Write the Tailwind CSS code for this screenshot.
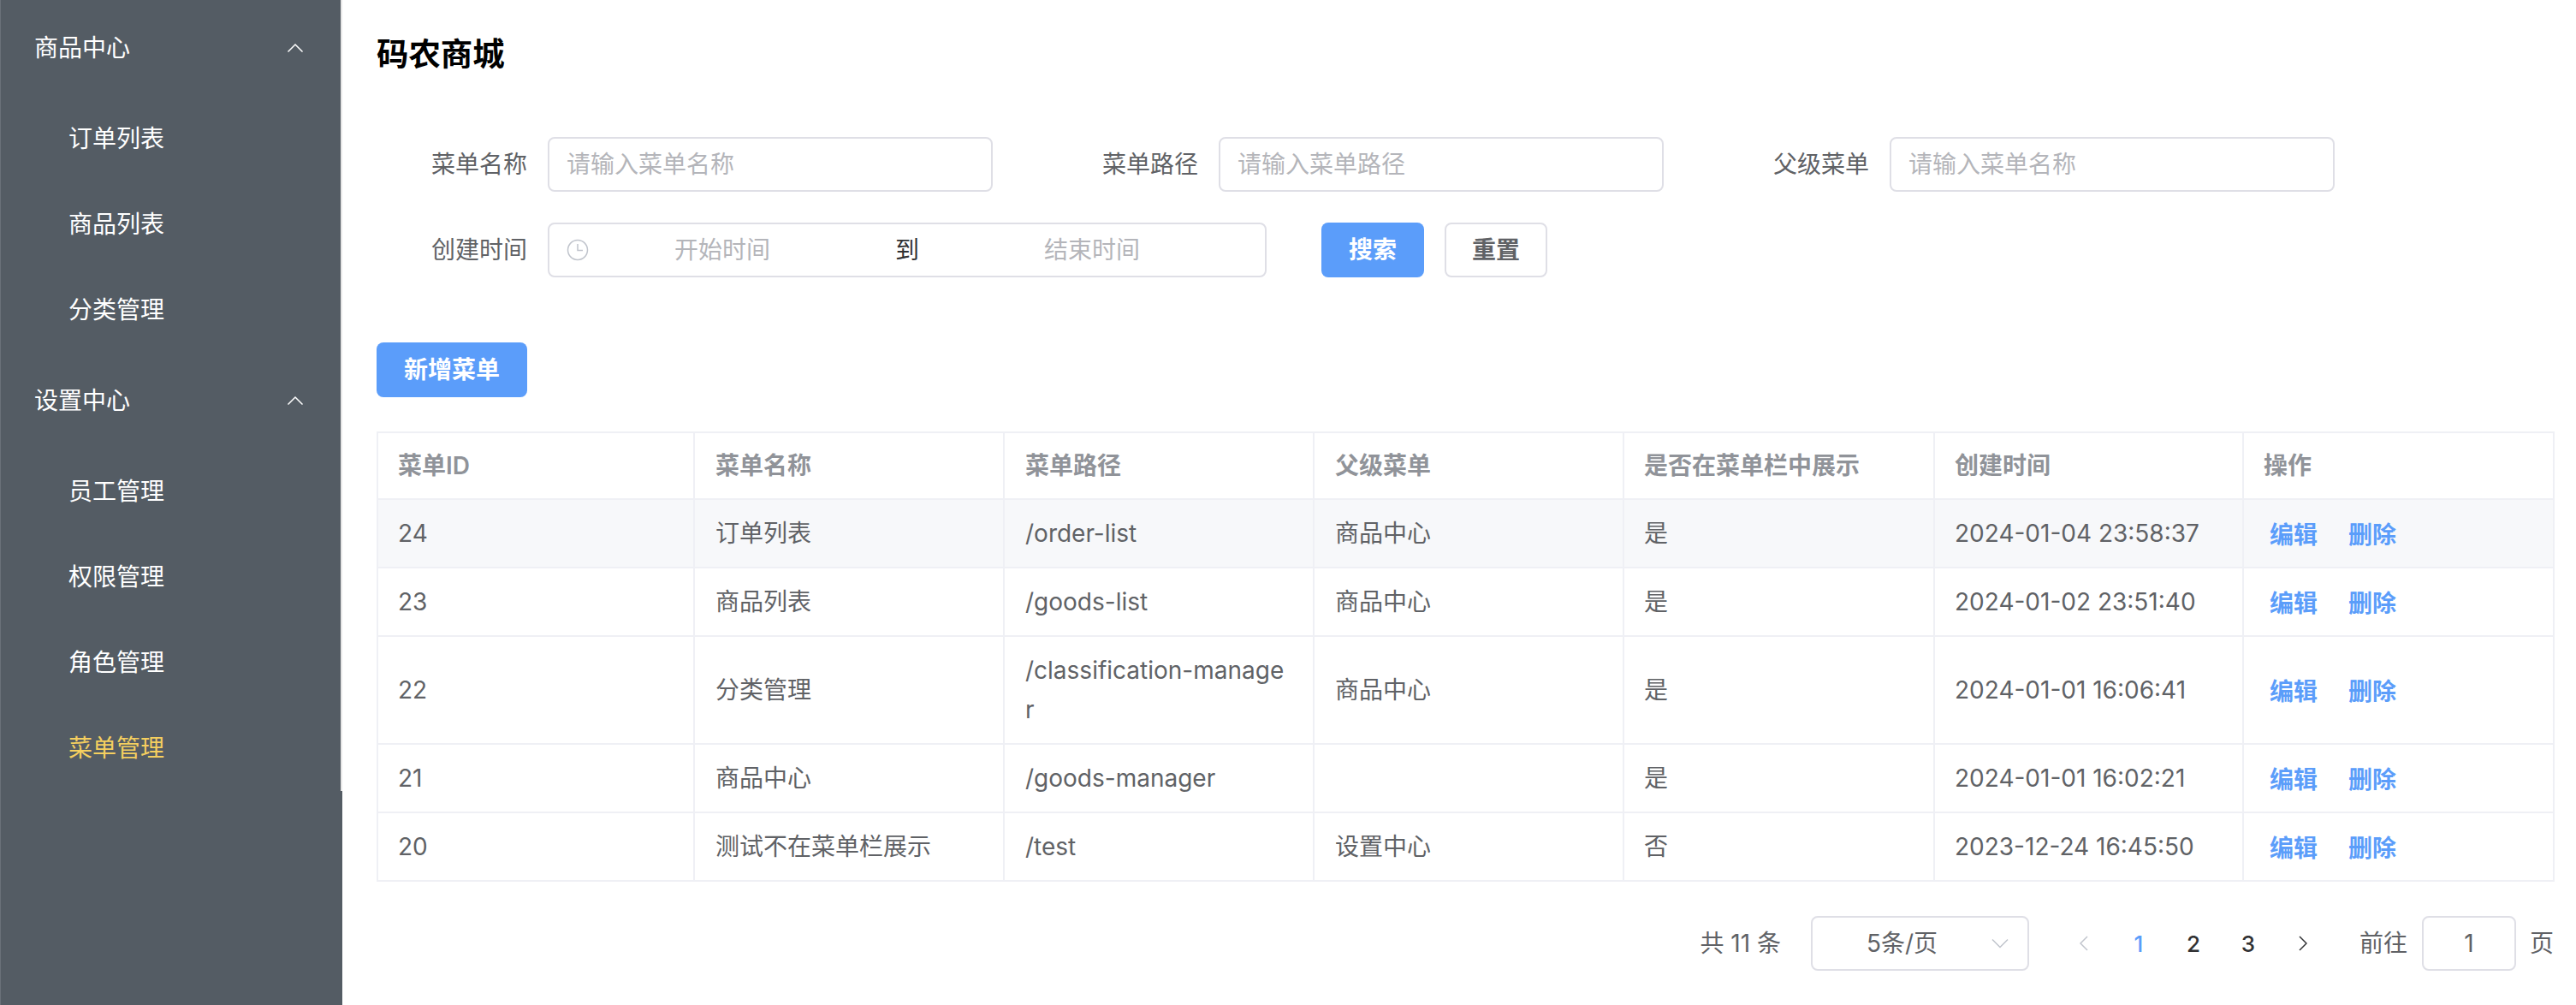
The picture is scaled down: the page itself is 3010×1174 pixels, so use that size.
<!DOCTYPE html>
<html lang="zh">
<head>
    <meta charset="UTF-8">
    <meta name="viewport" content="width=device-width, initial-scale=1.0">
    <title>码农商城</title>
    <script src="https://cdn.jsdelivr.net/npm/@tailwindcss/browser@4"></script>
</head>

<body class="bg-white h-[1174px] overflow-hidden flex text-[28px] text-[#606266] font-['Inter','Noto_Sans_CJK_SC',sans-serif]">

    <!--sidebar-->
    <aside class="w-[400px] h-[1174px] shrink-0 bg-[#545c64] border-l border-[#6a7179]">
        <div class="h-[924px] border-r-2 border-[#e6e6e6] text-white">
            <div class="h-[112px] pl-[39px] pr-[43px] flex items-center justify-between">
                <span>商品中心</span>
                <svg class="w-[20px] h-[12px]" viewBox="0 0 20 12" fill="none" stroke="#ffffff" stroke-width="1.5"><path d="M1.500 10.500 10 2l8.500 8.500"/></svg>
            </div>
            <div class="h-[100px] pl-[79px] flex items-center">订单列表</div>
            <div class="h-[100px] pl-[79px] flex items-center">商品列表</div>
            <div class="h-[100px] pl-[79px] flex items-center">分类管理</div>
            <div class="h-[112px] pl-[39px] pr-[43px] flex items-center justify-between">
                <span>设置中心</span>
                <svg class="w-[20px] h-[12px]" viewBox="0 0 20 12" fill="none" stroke="#ffffff" stroke-width="1.5"><path d="M1.500 10.500 10 2l8.500 8.500"/></svg>
            </div>
            <div class="h-[100px] pl-[79px] flex items-center">员工管理</div>
            <div class="h-[100px] pl-[79px] flex items-center">权限管理</div>
            <div class="h-[100px] pl-[79px] flex items-center">角色管理</div>
            <div class="h-[100px] pl-[79px] flex items-center text-[#f5cf5f]">菜单管理</div>
        </div>
    </aside>

    <!--main content-->
    <main class="w-[2610px] pl-[40px] pr-[26px]">
        <h3 class="h-[128px] mb-[32px] flex items-center text-[37.44px] font-bold text-black">码农商城</h3>

        <!--search form-->
        <div class="flex h-[64px] mb-[36px]">
            <label class="w-[200px] pr-[24px] flex items-center justify-end">菜单名称</label>
            <div class="w-[520px] mr-[64px] px-[20px] border-2 border-[#dfdfe6] rounded-[8px] flex items-center text-[#b4b5ba]">请输入菜单名称</div>
            <label class="w-[200px] pr-[24px] flex items-center justify-end">菜单路径</label>
            <div class="w-[520px] mr-[64px] px-[20px] border-2 border-[#dfdfe6] rounded-[8px] flex items-center text-[#b4b5ba]">请输入菜单路径</div>
            <label class="w-[200px] pr-[24px] flex items-center justify-end">父级菜单</label>
            <div class="w-[520px] px-[20px] border-2 border-[#dfdfe6] rounded-[8px] flex items-center text-[#b4b5ba]">请输入菜单名称</div>
        </div>
        <div class="flex h-[64px] mb-[76px]">
            <label class="w-[200px] pr-[24px] flex items-center justify-end">创建时间</label>
            <div class="w-[840px] mr-[64px] pl-[20px] border-2 border-[#dfdfe6] rounded-[8px] flex items-center text-[#b4b5ba]">
                <svg class="w-[26px] h-[26px]" viewBox="0 0 26 26" fill="none" stroke="#c0c4cc" stroke-width="1.5"><circle cx="13" cy="13" r="11.500"/><path d="M13 6v7.500h6"/></svg>
                <div class="w-[312px] text-center">开始时间</div>
                <div class="w-[120px] text-center text-[#303133]">到</div>
                <div class="w-[312px] text-center">结束时间</div>
            </div>
            <button class="w-[120px] mr-[24px] rounded-[8px] bg-[#5b9dfa] text-white font-semibold">搜索</button>
            <button class="w-[120px] rounded-[8px] border-2 border-[#dfdfe6] font-semibold">重置</button>
        </div>

        <button class="block w-[176px] h-[64px] mb-[40px] rounded-[8px] bg-[#5b9dfa] text-white font-semibold">新增菜单</button>

        <!--menu table-->
        <table class="w-[2543px] table-fixed border-collapse leading-[46px]">
            <colgroup>
                <col class="w-[370px]"><col class="w-[362px]"><col class="w-[362px]"><col class="w-[362px]"><col class="w-[363px]"><col class="w-[361px]"><col class="w-[363px]">
            </colgroup>
            <thead class="text-[#909399]">
                <tr class="h-[78px]">
                    <th class="border-2 border-[#eff0f5] px-[23px] text-left font-semibold">菜单ID</th>
                    <th class="border-2 border-[#eff0f5] px-[24px] text-left font-semibold">菜单名称</th>
                    <th class="border-2 border-[#eff0f5] px-[24px] text-left font-semibold">菜单路径</th>
                    <th class="border-2 border-[#eff0f5] px-[24px] text-left font-semibold">父级菜单</th>
                    <th class="border-2 border-[#eff0f5] px-[23px] text-left font-semibold">是否在菜单栏中展示</th>
                    <th class="border-2 border-[#eff0f5] px-[23px] text-left font-semibold">创建时间</th>
                    <th class="border-2 border-[#eff0f5] px-[23px] text-left font-semibold">操作</th>
                </tr>
            </thead>
            <tbody>
                <tr class="h-[80px] bg-[#f7f8fa]">
                    <td class="border-2 border-[#eff0f5] px-[23px] py-[16px]">24</td>
                    <td class="border-2 border-[#eff0f5] px-[24px] py-[16px]">订单列表</td>
                    <td class="border-2 border-[#eff0f5] pl-[24px] pr-[25px] py-[16px] break-all">/order-list</td>
                    <td class="border-2 border-[#eff0f5] px-[24px] py-[16px]">商品中心</td>
                    <td class="border-2 border-[#eff0f5] px-[23px] py-[16px]">是</td>
                    <td class="border-2 border-[#eff0f5] px-[23px] py-[16px]">2024-01-04 23:58:37</td>
                    <td class="border-2 border-[#eff0f5] pl-[30px] pt-[18px] pb-[14px] font-semibold text-[#5b9dfa]"><a class="mr-[36px]">编辑</a><a>删除</a></td>
                </tr>
                <tr class="h-[80px]">
                    <td class="border-2 border-[#eff0f5] px-[23px] py-[16px]">23</td>
                    <td class="border-2 border-[#eff0f5] px-[24px] py-[16px]">商品列表</td>
                    <td class="border-2 border-[#eff0f5] pl-[24px] pr-[25px] py-[16px] break-all">/goods-list</td>
                    <td class="border-2 border-[#eff0f5] px-[24px] py-[16px]">商品中心</td>
                    <td class="border-2 border-[#eff0f5] px-[23px] py-[16px]">是</td>
                    <td class="border-2 border-[#eff0f5] px-[23px] py-[16px]">2024-01-02 23:51:40</td>
                    <td class="border-2 border-[#eff0f5] pl-[30px] pt-[18px] pb-[14px] font-semibold text-[#5b9dfa]"><a class="mr-[36px]">编辑</a><a>删除</a></td>
                </tr>
                <tr class="h-[126px]">
                    <td class="border-2 border-[#eff0f5] px-[23px] py-[16px]">22</td>
                    <td class="border-2 border-[#eff0f5] px-[24px] py-[16px]">分类管理</td>
                    <td class="border-2 border-[#eff0f5] pl-[24px] pr-[25px] py-[16px] break-all">/classification-manager</td>
                    <td class="border-2 border-[#eff0f5] px-[24px] py-[16px]">商品中心</td>
                    <td class="border-2 border-[#eff0f5] px-[23px] py-[16px]">是</td>
                    <td class="border-2 border-[#eff0f5] px-[23px] py-[16px]">2024-01-01 16:06:41</td>
                    <td class="border-2 border-[#eff0f5] pl-[30px] pt-[18px] pb-[14px] font-semibold text-[#5b9dfa]"><a class="mr-[36px]">编辑</a><a>删除</a></td>
                </tr>
                <tr class="h-[80px]">
                    <td class="border-2 border-[#eff0f5] px-[23px] py-[16px]">21</td>
                    <td class="border-2 border-[#eff0f5] px-[24px] py-[16px]">商品中心</td>
                    <td class="border-2 border-[#eff0f5] pl-[24px] pr-[25px] py-[16px] break-all">/goods-manager</td>
                    <td class="border-2 border-[#eff0f5] px-[24px] py-[16px]"></td>
                    <td class="border-2 border-[#eff0f5] px-[23px] py-[16px]">是</td>
                    <td class="border-2 border-[#eff0f5] px-[23px] py-[16px]">2024-01-01 16:02:21</td>
                    <td class="border-2 border-[#eff0f5] pl-[30px] pt-[18px] pb-[14px] font-semibold text-[#5b9dfa]"><a class="mr-[36px]">编辑</a><a>删除</a></td>
                </tr>
                <tr class="h-[80px]">
                    <td class="border-2 border-[#eff0f5] px-[23px] py-[16px]">20</td>
                    <td class="border-2 border-[#eff0f5] px-[24px] py-[16px]">测试不在菜单栏展示</td>
                    <td class="border-2 border-[#eff0f5] pl-[24px] pr-[25px] py-[16px] break-all">/test</td>
                    <td class="border-2 border-[#eff0f5] px-[24px] py-[16px]">设置中心</td>
                    <td class="border-2 border-[#eff0f5] px-[23px] py-[16px]">否</td>
                    <td class="border-2 border-[#eff0f5] px-[23px] py-[16px]">2023-12-24 16:45:50</td>
                    <td class="border-2 border-[#eff0f5] pl-[30px] pt-[18px] pb-[14px] font-semibold text-[#5b9dfa]"><a class="mr-[36px]">编辑</a><a>删除</a></td>
                </tr>
            </tbody>
        </table>

        <!--pagination-->
        <div class="mt-[40px] h-[64px] flex items-center justify-end">
            <span class="mr-[35px]">共 11 条</span>
            <div class="w-[255px] h-[64px] border-2 border-[#dfdfe6] rounded-[8px] flex items-center">
                <span class="flex-1 text-center">5条/页</span>
                <svg class="w-[20px] h-[12px] mr-[22px]" viewBox="0 0 20 12" fill="none" stroke="#c0c4cc" stroke-width="1.5"><path d="M1 1.500 10 10.500l9-9"/></svg>
            </div>
            <div class="w-[64px] ml-[32px] flex justify-center">
                <svg class="w-[10px] h-[18px]" viewBox="0 0 10 18" fill="none" stroke="#c0c4cc" stroke-width="1.5"><path d="M9 1 1 9l8 8"/></svg>
            </div>
            <span class="w-[64px] text-center text-[26px] font-medium text-[#5b9dfa]">1</span>
            <span class="w-[64px] text-center text-[26px] font-medium text-[#303133]">2</span>
            <span class="w-[64px] text-center text-[26px] font-medium text-[#303133]">3</span>
            <div class="w-[64px] mr-[34px] flex justify-center">
                <svg class="w-[10px] h-[18px]" viewBox="0 0 10 18" fill="none" stroke="#303133" stroke-width="1.5"><path d="m1 1 8 8-8 8"/></svg>
            </div>
            <span>前往</span>
            <div class="w-[110px] h-[64px] ml-[17px] mr-[16px] border-2 border-[#dfdfe6] rounded-[8px] flex items-center justify-center">1</div>
            <span>页</span>
        </div>
    </main>

</body>
</html>
